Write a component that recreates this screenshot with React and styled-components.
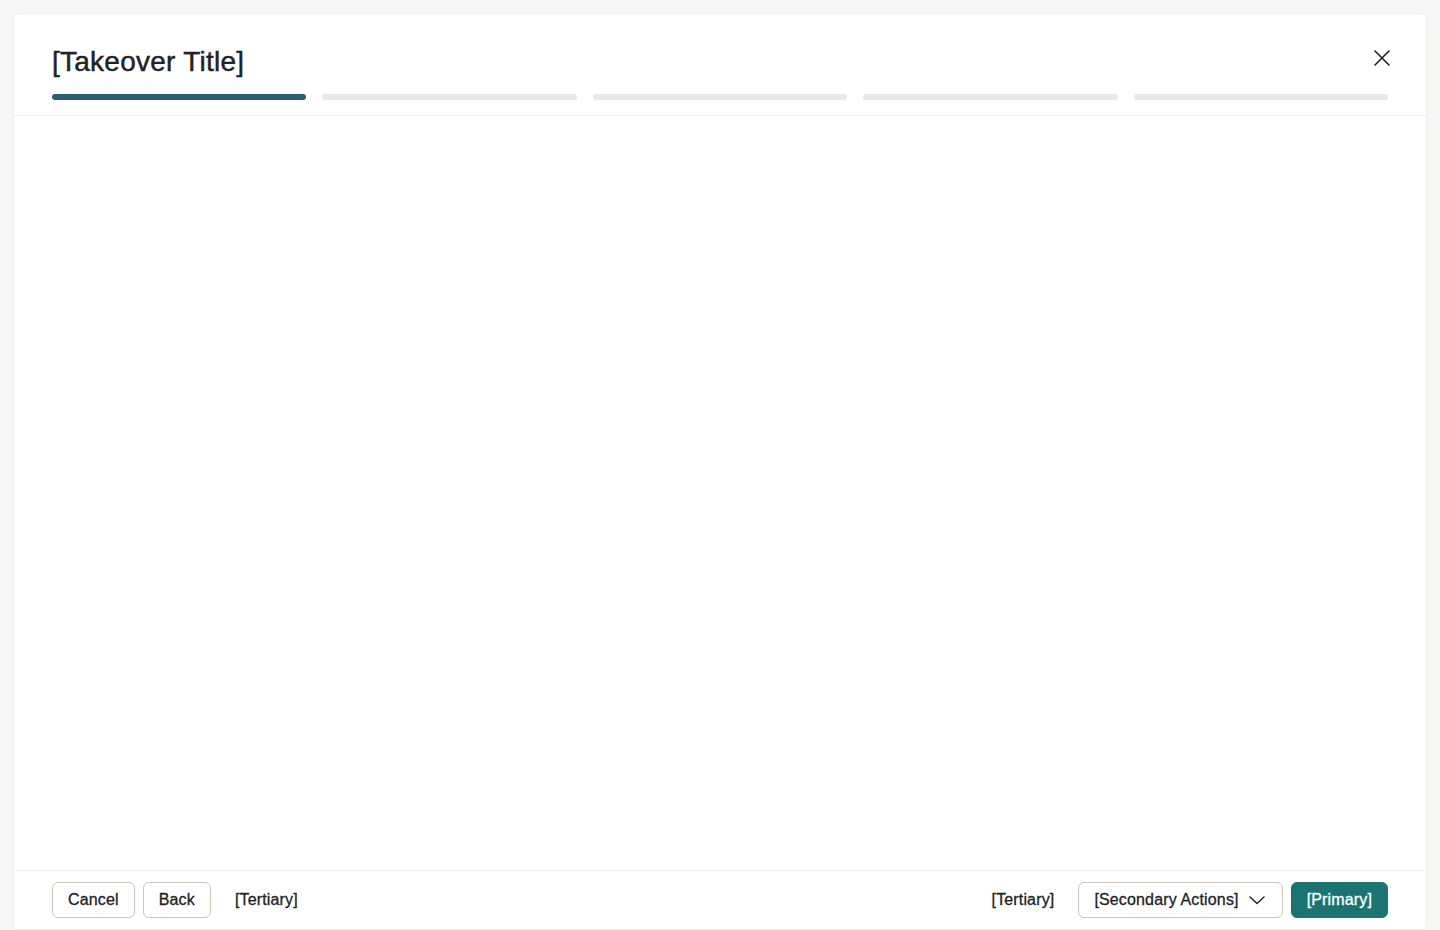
import React from "react";
import styled, { createGlobalStyle } from "styled-components";

const GlobalStyle = createGlobalStyle`
  html, body {
    margin: 0;
    padding: 0;
    background: #f7f7f5;
    font-family: "Liberation Sans", Arial, sans-serif;
    color: #222222;
  }
  * {
    box-sizing: border-box;
  }
`;

const Takeover = styled.div`
  margin: 13px 13px 0;
  height: 917px;
  background: #ffffff;
  border: 1px solid #efeee9;
  border-radius: 6px;
  display: flex;
  flex-direction: column;
  overflow: hidden;
`;

const Header = styled.header`
  padding: 30px 38px 15px;
  border-bottom: 1px solid #f0efea;
  display: flex;
  flex-direction: column;
  gap: 14px;
`;

const TitleRow = styled.div`
  display: flex;
  justify-content: space-between;
  align-items: flex-start;
`;

const Title = styled.h1`
  margin: 0;
  font-size: 28px;
  line-height: 36px;
  font-weight: 500;
  letter-spacing: 0.25px;
  -webkit-text-stroke: 0.45px currentColor;
  color: #222222;
`;

const CloseButton = styled.button`
  width: 36px;
  height: 36px;
  margin: -4px -12px 0 0;
  padding: 0;
  border: none;
  background: transparent;
  display: flex;
  align-items: center;
  justify-content: center;
  color: #222222;
  cursor: pointer;
`;

const Steps = styled.div`
  display: grid;
  grid-template-columns: repeat(5, 1fr);
  gap: 16px;
`;

const Step = styled.div`
  height: 6px;
  border-radius: 3px;
  background: ${(p) => (p.$active ? "#2a5f73" : "#e9e8e2")};
`;

const Body = styled.main`
  flex: 1;
`;

const Footer = styled.footer`
  border-top: 1px solid #f0efea;
  padding: 11px 38px;
  display: flex;
  justify-content: space-between;
  align-items: center;
`;

const Group = styled.div`
  display: flex;
  align-items: center;
  gap: 8px;
`;

const Button = styled.button`
  height: 36px;
  padding: 0 15px;
  border-radius: 6px;
  font-family: "Liberation Sans", Arial, sans-serif;
  font-size: 16px;
  font-weight: 500;
  letter-spacing: 0.15px;
  -webkit-text-stroke: 0.3px currentColor;
  display: inline-flex;
  align-items: center;
  gap: 8px;
  cursor: pointer;
  border: 1px solid
    ${(p) =>
      p.$variant === "primary"
        ? "#1b7472"
        : p.$variant === "tertiary"
        ? "transparent"
        : "#cbc5b7"};
  background: ${(p) => (p.$variant === "primary" ? "#1b7472" : "transparent")};
  color: ${(p) => (p.$variant === "primary" ? "#ffffff" : "#222222")};
`;

const CloseIcon = () => (
  <svg width="16" height="16" viewBox="0 0 16 16" fill="none">
    <path d="M1 1 L15 15 M15 1 L1 15" stroke="currentColor" strokeWidth="1.6" strokeLinecap="round" />
  </svg>
);

const Chevron = () => (
  <svg width="20" height="20" viewBox="0 0 20 20" fill="none">
    <path d="M3 7 L10 13.5 L17 7" stroke="currentColor" strokeWidth="1.5" strokeLinecap="round" strokeLinejoin="round" />
  </svg>
);

export default function App() {
  const steps = [true, false, false, false, false];
  return (
    <>
      <GlobalStyle />
      <Takeover>
        <Header>
          <TitleRow>
            <Title>[Takeover Title]</Title>
            <CloseButton aria-label="Close">
              <CloseIcon />
            </CloseButton>
          </TitleRow>
          <Steps>
            {steps.map((active, i) => (
              <Step key={i} $active={active} />
            ))}
          </Steps>
        </Header>
        <Body />
        <Footer>
          <Group>
            <Button>Cancel</Button>
            <Button>Back</Button>
            <Button $variant="tertiary">[Tertiary]</Button>
          </Group>
          <Group>
            <Button $variant="tertiary">[Tertiary]</Button>
            <Button>
              [Secondary Actions]
              <Chevron />
            </Button>
            <Button $variant="primary">[Primary]</Button>
          </Group>
        </Footer>
      </Takeover>
    </>
  );
}
